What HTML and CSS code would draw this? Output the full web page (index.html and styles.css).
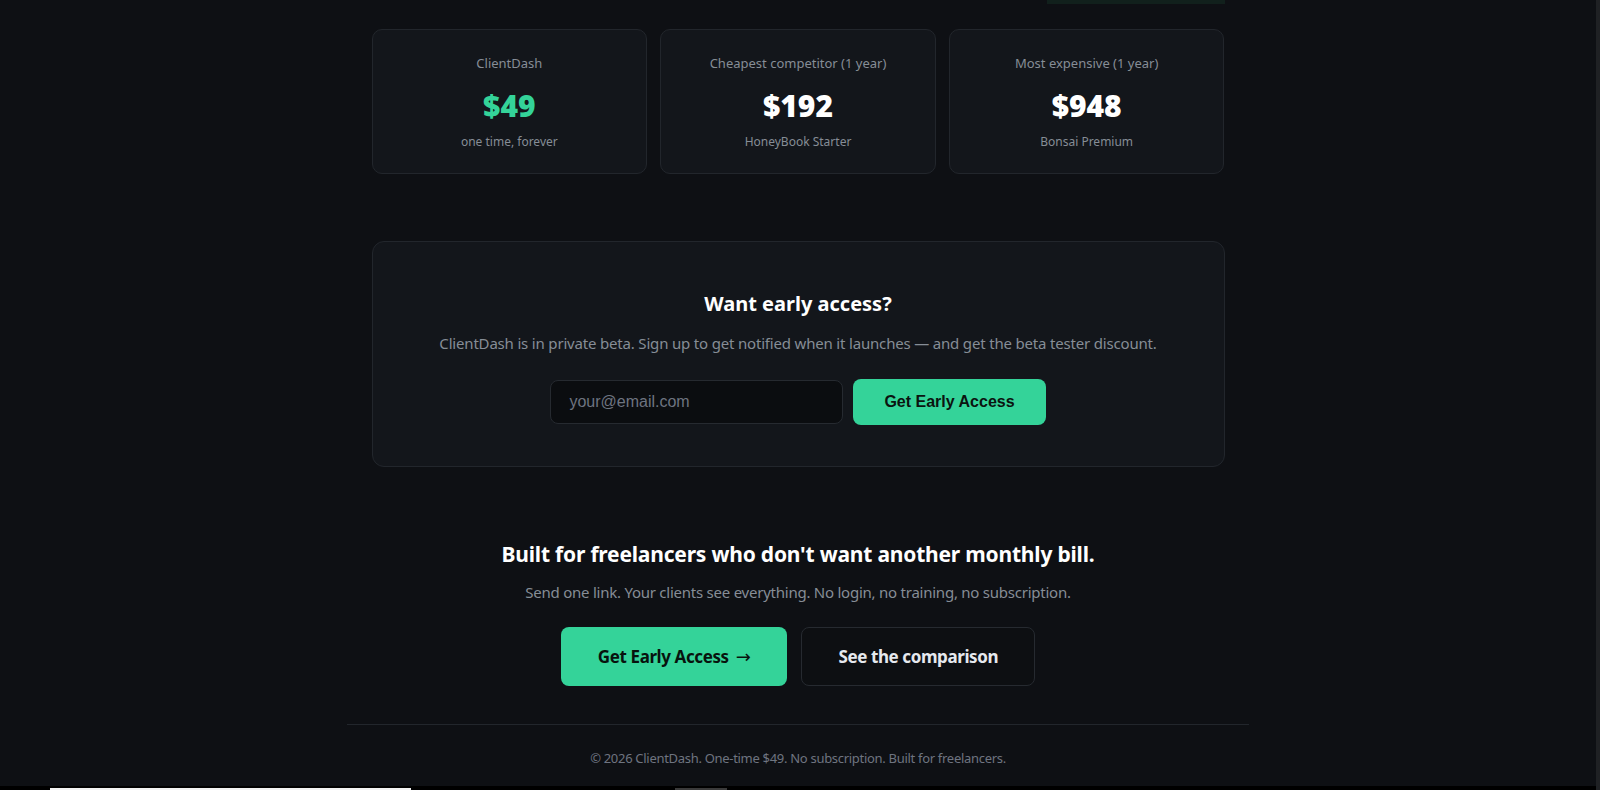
FILE: index.html
```html
<!DOCTYPE html>
<html lang="en">
<head>
<meta charset="utf-8">
<title>ClientDash</title>
<link rel="stylesheet" href="styles.css">
</head>
<body>
<div class="topbar-wrap"><div class="topbar"></div></div>
<main class="wrap">
  <section class="cards">
    <div class="card">
      <div class="card-label">ClientDash</div>
      <div class="card-price green">$49</div>
      <div class="card-sub">one time, forever</div>
    </div>
    <div class="card">
      <div class="card-label">Cheapest competitor (1 year)</div>
      <div class="card-price">$192</div>
      <div class="card-sub">HoneyBook Starter</div>
    </div>
    <div class="card">
      <div class="card-label">Most expensive (1 year)</div>
      <div class="card-price">$948</div>
      <div class="card-sub">Bonsai Premium</div>
    </div>
  </section>

  <section class="access">
    <h2 class="access-title">Want early access?</h2>
    <p class="access-text">ClientDash is in private beta. Sign up to get notified when it launches — and get the beta tester discount.</p>
    <form class="access-form">
      <input class="access-input" type="email" placeholder="your@email.com">
      <button class="access-btn" type="button">Get Early Access</button>
    </form>
  </section>

  <section class="cta">
    <h2 class="cta-title">Built for freelancers who don't want another monthly bill.</h2>
    <p class="cta-text">Send one link. Your clients see everything. No login, no training, no subscription.</p>
    <div class="cta-buttons">
      <a class="btn btn-primary" href="#">Get Early Access <span class="arrow">→</span></a>
      <a class="btn btn-secondary" href="#">See the comparison</a>
    </div>
  </section>
</main>
<footer class="footer">
  <p class="footer-text">© 2026 ClientDash. One-time $49. No subscription. Built for freelancers.</p>
</footer>
<div class="taskbar"><span class="seg seg-white"></span><span class="seg seg-gray"></span></div>
</body>
</html>
```

FILE: styles.css
```css
html {
  background: #0e1014;
  border-right: 4px solid #1f2124;
}
body {
  margin: 0;
  background: #0e1014;
  color: #f0f3f6;
  font-family: "Noto Sans", "Open Sans", sans-serif;
  overflow: hidden;
  height: 790px;
}
.topbar-wrap {
  max-width: 853px;
  margin: 0 auto;
  display: flex;
  justify-content: flex-end;
}
.topbar {
  width: 178px;
  height: 4px;
  background: #11201c;
}
.wrap {
  max-width: 853px;
  margin: 0 auto;
}
.cards {
  margin-top: 25px;
  display: grid;
  grid-template-columns: repeat(3, 1fr);
  gap: 13px;
}
.card {
  background: #13161b;
  border: 1px solid #22262c;
  border-radius: 10px;
  padding: 24px 16px 22px;
  text-align: center;
}
.card-label {
  font-size: 13px;
  line-height: 18px;
  color: #868d96;
}
.card-price {
  margin-top: 16px;
  font-size: 30px;
  line-height: 35px;
  font-weight: 900;
  color: #ffffff;
}
.card-price.green {
  color: #34d399;
}
.card-sub {
  margin-top: 10px;
  font-size: 12px;
  line-height: 18px;
  color: #868d96;
}
.access {
  margin-top: 67px;
  background: #13161b;
  border: 1px solid #22262c;
  border-radius: 12px;
  padding: 48px 40px 41px;
  text-align: center;
}
.access-title {
  margin: 0;
  font-size: 20px;
  line-height: 28px;
  font-weight: 700;
  color: #ffffff;
}
.access-text {
  margin: 14px 0 25px;
  font-size: 15px;
  line-height: 22px;
  letter-spacing: -0.18px;
  color: #868d96;
}
.access-form {
  display: flex;
  justify-content: center;
  align-items: center;
  gap: 10px;
  height: 46px;
}
.access-input {
  box-sizing: border-box;
  width: 293px;
  height: 44px;
  padding: 0 18px;
  background: #0b0d10;
  border: 1px solid #262a30;
  border-radius: 8px;
  color: #e6e6e6;
  font-family: "Liberation Sans", Arial, sans-serif;
  font-size: 16px;
  outline: none;
}
.access-input::placeholder {
  color: #6e7480;
}
.access-btn {
  box-sizing: border-box;
  height: 46px;
  padding: 0 31px;
  background: #34d399;
  border: none;
  border-radius: 8px;
  color: #0b1410;
  font-family: "Liberation Sans", Arial, sans-serif;
  font-size: 16px;
  font-weight: 700;
}
.cta {
  margin-top: 72px;
  text-align: center;
}
.cta-title {
  margin: 0;
  font-size: 21px;
  line-height: 30px;
  font-weight: 700;
  letter-spacing: -0.2px;
  color: #ffffff;
}
.cta-text {
  margin: 12px 0 0;
  font-size: 15px;
  line-height: 22px;
  letter-spacing: -0.24px;
  color: #868d96;
}
.cta-buttons {
  margin-top: 24px;
  display: flex;
  justify-content: center;
  gap: 14px;
}
.btn {
  display: inline-block;
  padding: 17px 36px;
  font-size: 17px;
  line-height: 23px;
  font-weight: 700;
  letter-spacing: -0.4px;
  text-decoration: none;
  border-radius: 8px;
  border: 1px solid transparent;
}
.arrow {
  display: inline-block;
  margin-left: 3px;
  font-family: "DejaVu Sans", sans-serif;
  font-weight: 400;
  font-size: 18px;
}
.btn-primary {
  background: #34d399;
  color: #08130e;
}
.btn-secondary {
  background: #0d0f12;
  border-color: #262a30;
  color: #e6e9ee;
}
.footer {
  max-width: 902px;
  margin: 38px auto 0;
  border-top: 1px solid #22262c;
  padding: 24px 0 19px;
  text-align: center;
}
.footer-text {
  margin: 0;
  font-size: 13px;
  line-height: 18px;
  letter-spacing: -0.3px;
  color: #6e7480;
}
.taskbar {
  height: 4px;
  background: #000000;
  display: flex;
  align-items: flex-end;
}
.seg {
  display: block;
  height: 2px;
}
.seg-white {
  margin-left: 50px;
  width: 361px;
  background: #f2f2f2;
}
.seg-gray {
  margin-left: 264px;
  width: 52px;
  background: #3a3a3a;
}
```
